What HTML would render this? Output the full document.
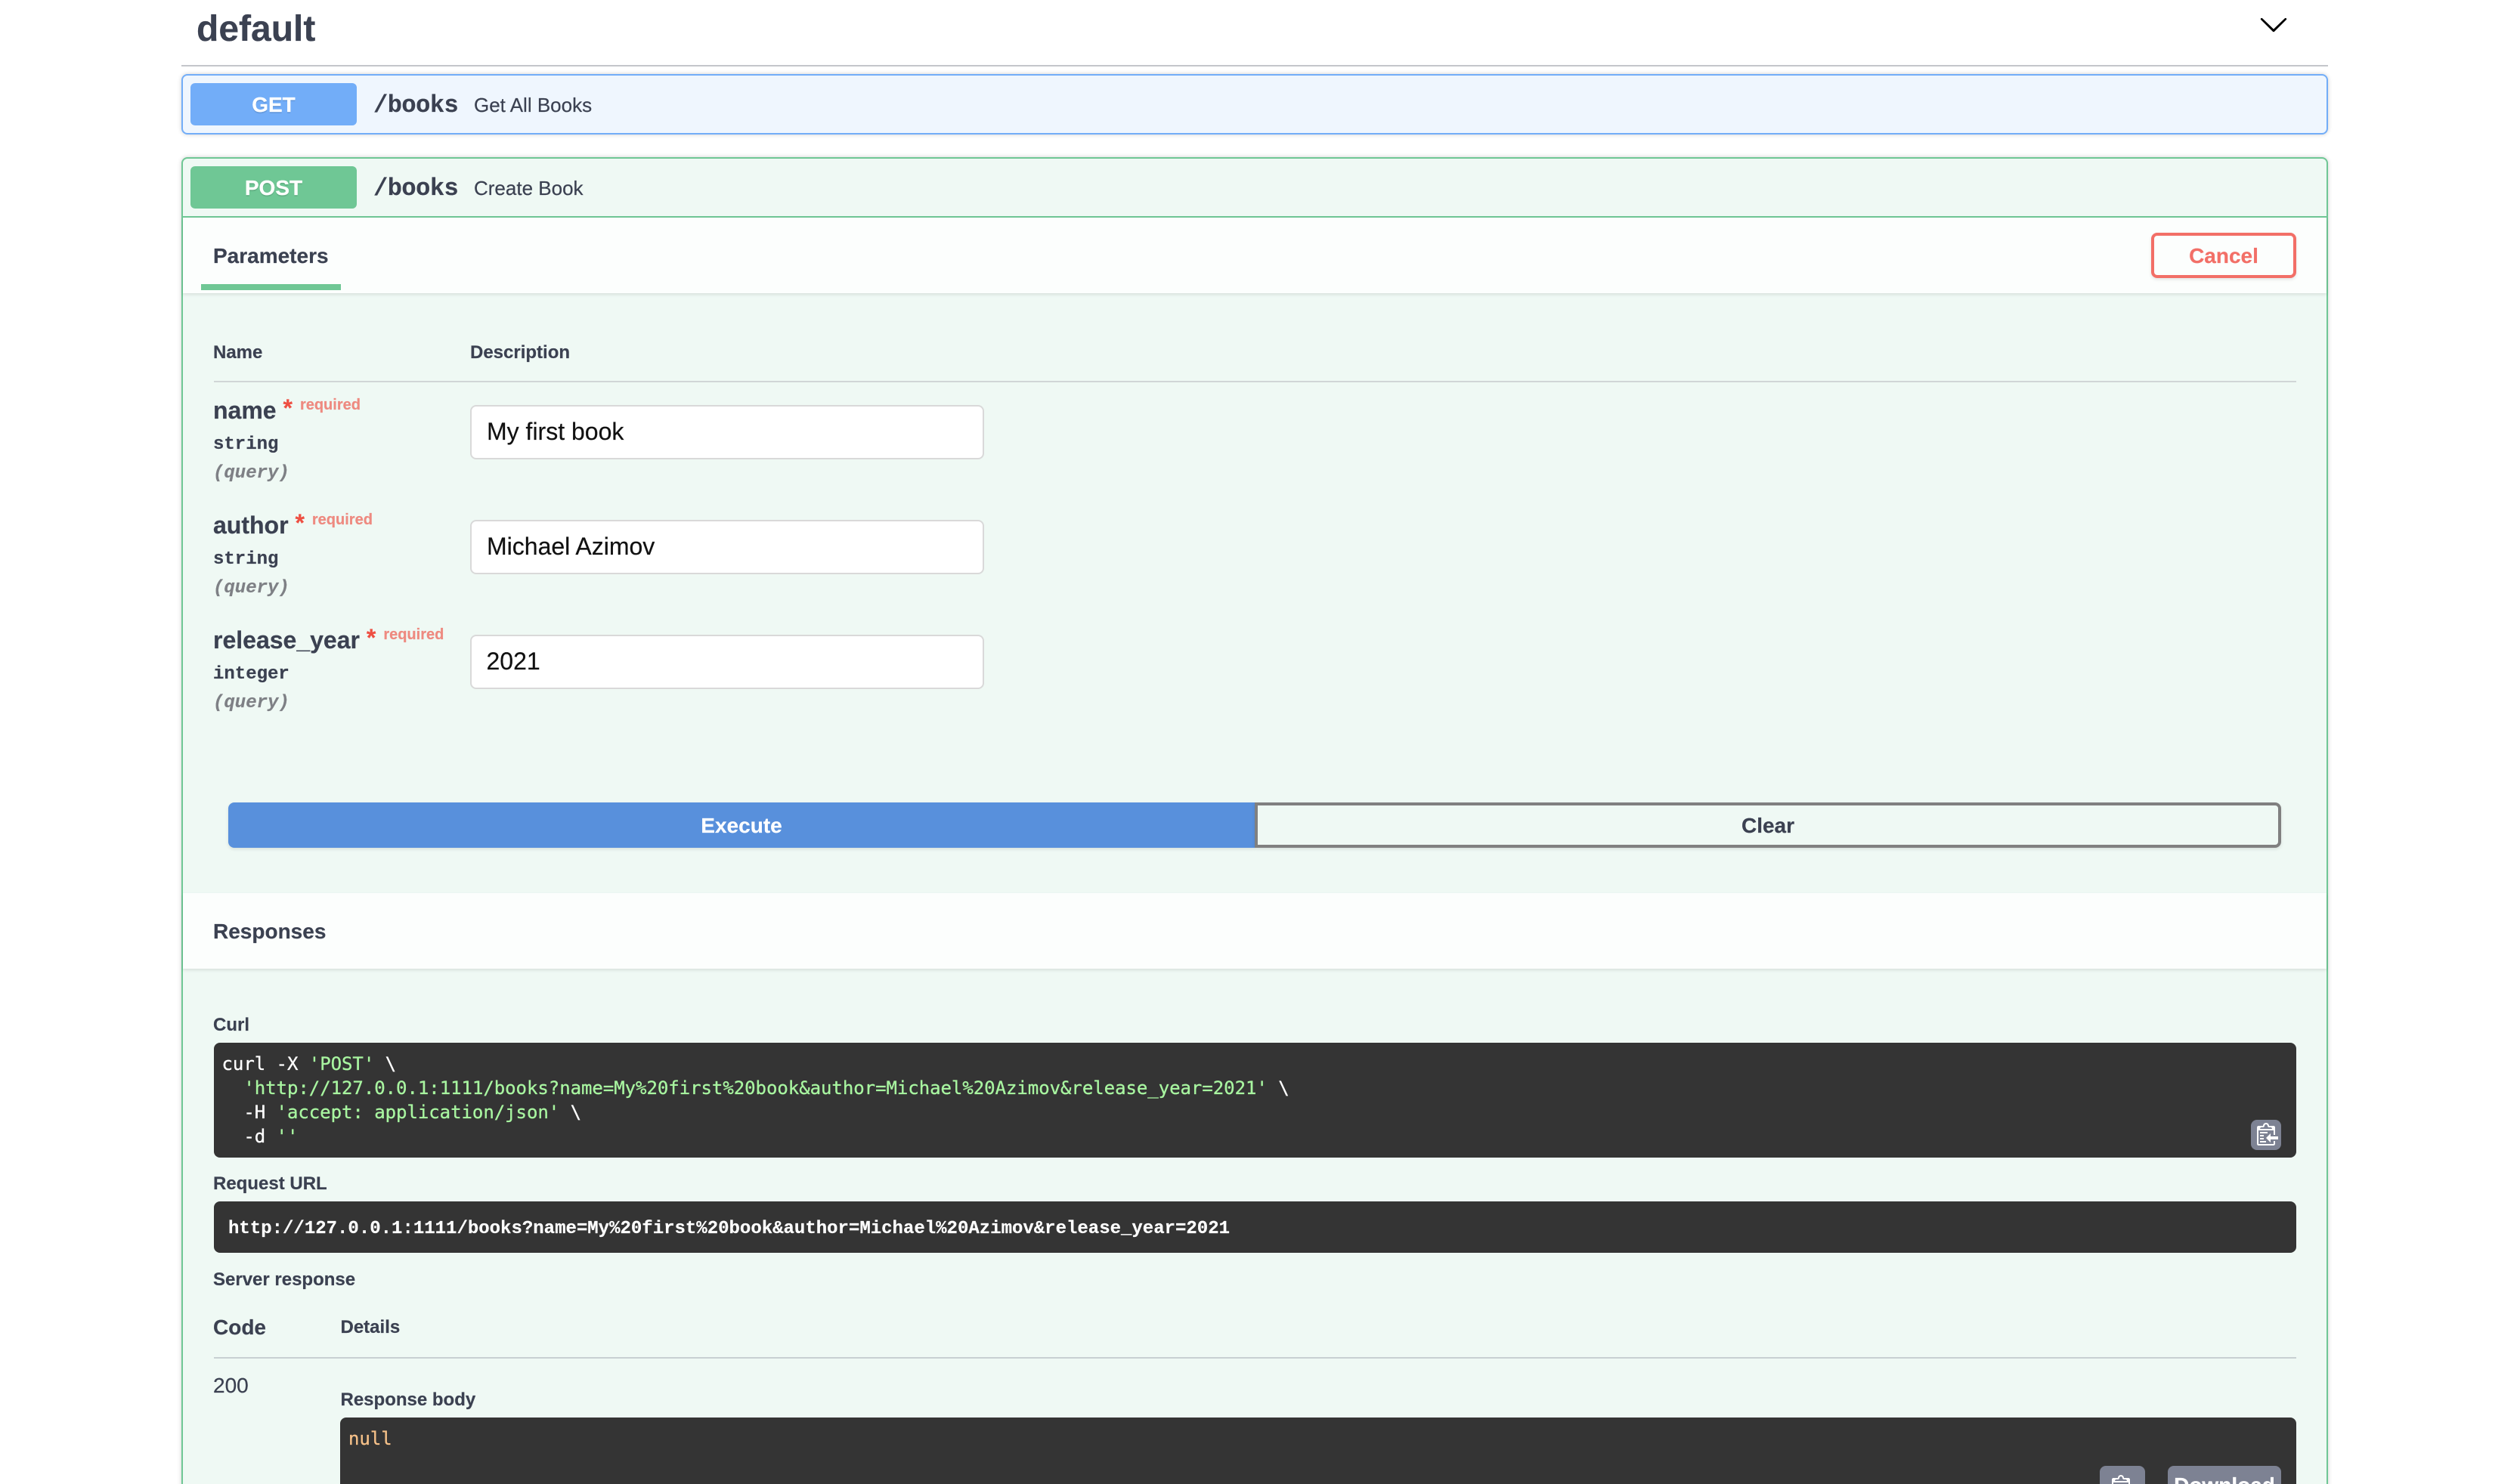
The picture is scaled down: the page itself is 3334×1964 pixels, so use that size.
<!DOCTYPE html>
<html lang="en"><head><meta charset="utf-8"><title>default</title>
<style>
html,body{margin:0;padding:0;background:#fff;}
#p{position:relative;width:3334px;height:1964px;overflow:hidden;background:#fff;font-family:"Liberation Sans",sans-serif;color:#3b4151;}
#p div,#p svg{position:absolute;box-sizing:border-box;}
.t{line-height:1em;white-space:pre;-webkit-text-stroke:.2px currentColor;}
.b{font-weight:bold;}
.f24{font-size:24px;}.f28{font-size:28px;}.f32{font-size:32px;}.f26{font-size:26px;}
.m{font-family:"Liberation Mono",monospace;font-weight:bold;}
.d{font-family:"DejaVu Sans Mono",monospace;font-size:24px;line-height:1em;white-space:pre;color:#fff;letter-spacing:-.04px;-webkit-text-stroke:.3px currentColor;}
.d span{color:#a8f5a0;}
.c{text-align:center;}
.badge{left:252px;width:220px;height:56px;border-radius:6px;}
.input{left:622px;width:680px;height:72px;background:#fff;border:2px solid #d9d9d9;border-radius:8px;}
.code{background:#343434;border-radius:8px;}
.btn{background:#7d8293;border-radius:8px;}
.req{font-size:20px;color:#ee8a80;position:relative;top:-12px;padding-left:10px;}
.star{color:#ee4f42;font-weight:bold;position:relative;top:-3px;}
.q{font-style:italic;color:#7e8085;}
.bar{left:242px;width:2836px;background:#fcfefd;box-shadow:0 2px 4px rgba(0,0,0,.1);}
</style></head><body><div id="p">

<div class="t b" style="left:260px;top:15.4px;font-size:48px;">default</div>
<svg style="left:2988px;top:12px;" width="40" height="40" viewBox="0 0 20 20"><path d="M17.418 6.109c.272-.268.709-.268.979 0s.271.701 0 .969l-7.908 7.83c-.27.268-.707.268-.979 0l-7.908-7.83c-.27-.268-.27-.701 0-.969.271-.268.709-.268.979 0L10 13.25l7.418-7.141z" fill="#000"/></svg>
<div style="left:240px;top:86px;width:2840px;height:2px;background:#c4c6cb;"></div>

<!-- GET -->
<div style="left:240px;top:98px;width:2840px;height:80px;background:#eff6fe;border:2px solid #72adf8;border-radius:8px;box-shadow:0 0 6px rgba(0,0,0,.19);"></div>
<div class="badge" style="top:110px;background:#72adf8;"></div>
<div class="t b f28 c" style="left:252px;width:220px;top:125.3px;color:#fff;text-shadow:0 2px 0 rgba(0,0,0,.1);">GET</div>
<div class="t m f32" style="left:494px;top:123.5px;letter-spacing:-.5px;">/books</div>
<div class="t f26" style="left:627px;top:126px;">Get All Books</div>

<!-- POST -->
<div style="left:240px;top:208px;width:2840px;height:1800px;background:#eff9f4;border:2px solid #6fc795;border-radius:8px;box-shadow:0 0 6px rgba(0,0,0,.19);"></div>
<div class="badge" style="top:220px;background:#6fc795;"></div>
<div class="t b f28 c" style="left:252px;width:220px;top:235.3px;color:#fff;text-shadow:0 2px 0 rgba(0,0,0,.1);">POST</div>
<div class="t m f32" style="left:494px;top:233.5px;letter-spacing:-.5px;">/books</div>
<div class="t f26" style="left:627px;top:236px;">Create Book</div>
<div style="left:242px;top:286px;width:2836px;height:2px;background:#6fc795;"></div>

<!-- Parameters header -->
<div class="bar" style="top:288px;height:100px;"></div>
<div class="t b f28" style="left:282px;top:325.3px;">Parameters</div>
<div style="left:266px;top:376px;width:185px;height:8px;background:#6fc795;"></div>
<div style="left:2846px;top:308px;width:192px;height:60px;border:4px solid #f26f67;border-radius:8px;box-shadow:0 2px 4px rgba(0,0,0,.1);"></div>
<div class="t b f28 c" style="left:2846px;width:192px;top:325.3px;color:#f26f67;">Cancel</div>

<!-- Table -->
<div class="t b f24" style="left:282px;top:455.3px;">Name</div>
<div class="t b f24" style="left:622px;top:455.3px;">Description</div>
<div style="left:283px;top:504px;width:2755px;height:2px;background:#d0d6d6;"></div>

<div class="t b f32" style="left:282px;top:526.9px;">name<span class="star">&nbsp;*</span><span class="req">required</span></div>
<div class="t m f24" style="left:282px;top:576.6px;">string</div>
<div class="t m f24 q" style="left:282px;top:614.6px;">(query)</div>
<div class="input" style="top:536px;"></div>
<div class="t f32" style="left:644px;top:555.4px;color:#111;">My first book</div>

<div class="t b f32" style="left:282px;top:678.9px;">author<span class="star">&nbsp;*</span><span class="req">required</span></div>
<div class="t m f24" style="left:282px;top:728.6px;">string</div>
<div class="t m f24 q" style="left:282px;top:766.6px;">(query)</div>
<div class="input" style="top:688px;"></div>
<div class="t f32" style="left:644px;top:707.4px;color:#111;">Michael Azimov</div>

<div class="t b f32" style="left:282px;top:830.9px;">release_year<span class="star">&nbsp;*</span><span class="req">required</span></div>
<div class="t m f24" style="left:282px;top:880.6px;">integer</div>
<div class="t m f24 q" style="left:282px;top:918.6px;">(query)</div>
<div class="input" style="top:840px;"></div>
<div class="t f32" style="left:643.5px;top:859.4px;color:#111;">2021</div>

<!-- Buttons -->
<div style="left:302px;top:1062px;width:1358px;height:60px;background:#5890dc;border-radius:8px 0 0 8px;box-shadow:0 2px 4px rgba(0,0,0,.1);"></div>
<div class="t b f28 c" style="left:302px;width:1358px;top:1079px;color:#fff;">Execute</div>
<div style="left:1660px;top:1062px;width:1358px;height:60px;border:4px solid #808080;border-radius:0 8px 8px 0;box-shadow:0 2px 4px rgba(0,0,0,.1);"></div>
<div class="t b f28 c" style="left:1660px;width:1358px;top:1079px;">Clear</div>

<!-- Responses -->
<div class="bar" style="top:1182px;height:100px;"></div>
<div class="t b f28" style="left:282px;top:1218.5px;">Responses</div>

<div class="t b f24" style="left:282px;top:1344.7px;">Curl</div>
<div class="code" style="left:283px;top:1380px;width:2755px;height:152px;"></div>
<div class="d" style="left:293.5px;top:1395.7px;">curl -X <span>'POST'</span> \</div>
<div class="d" style="left:293.5px;top:1427.7px;">  <span>'http://127.0.0.1:1111/books?name=My%20first%20book&amp;author=Michael%20Azimov&amp;release_year=2021'</span> \</div>
<div class="d" style="left:293.5px;top:1459.7px;">  -H <span>'accept: application/json'</span> \</div>
<div class="d" style="left:293.5px;top:1491.7px;">  -d <span>''</span></div>
<div class="btn" style="left:2978px;top:1482px;width:40px;height:40px;"></div>
<svg style="left:2986px;top:1484px;" width="32" height="32" viewBox="0 0 16 16"><path fill="#fff" fill-rule="evenodd" d="M2 13h4v1H2v-1zm5-6H2v1h5V7zm2 3V8l-3 3 3 3v-2h5v-2H9zM4.500 9H2v1h2.500V9zM2 12h2.500v-1H2v1zm9 1h1v2c-.02.28-.11.52-.3.7-.19.18-.42.28-.7.3H1c-.55 0-1-.45-1-1V4c0-.55.45-1 1-1h3c0-1.110.89-2 2-2 1.110 0 2 .89 2 2h3c.55 0 1 .45 1 1v5h-1V6H1v9h10v-2zM2 5h8c0-.55-.45-1-1-1H8c-.55 0-1-.45-1-1s-.45-1-1-1-1 .45-1 1-.45 1-1 1H3c-.55 0-1 .45-1 1z"/></svg>

<div class="t b f24" style="left:282px;top:1554.7px;">Request URL</div>
<div class="code" style="left:283px;top:1590px;width:2755px;height:68px;"></div>
<div class="t m f24" style="left:302px;top:1614.6px;color:#fff;">http://127.0.0.1:1111/books?name=My%20first%20book&amp;author=Michael%20Azimov&amp;release_year=2021</div>

<div class="t b f24" style="left:282px;top:1681.7px;">Server response</div>
<div class="t b f28" style="left:282px;top:1743.3px;">Code</div>
<div class="t b f24" style="left:450.5px;top:1744.7px;">Details</div>
<div style="left:283px;top:1796px;width:2755px;height:2px;background:#c8d0d2;"></div>
<div class="t f28" style="left:282px;top:1820.3px;">200</div>
<div class="t b f24" style="left:450.5px;top:1840.7px;">Response body</div>
<div class="code" style="left:450px;top:1876px;width:2588px;height:140px;"></div>
<div class="d" style="left:461px;top:1891.7px;color:#f5c088;">null</div>
<div class="btn" style="left:2778px;top:1940px;width:60px;height:60px;"></div>
<svg style="left:2794px;top:1950px;" width="32" height="32" viewBox="0 0 16 16"><path fill="#fff" fill-rule="evenodd" d="M2 13h4v1H2v-1zm5-6H2v1h5V7zm2 3V8l-3 3 3 3v-2h5v-2H9zM4.500 9H2v1h2.500V9zM2 12h2.500v-1H2v1zm9 1h1v2c-.02.28-.11.52-.3.7-.19.18-.42.28-.7.3H1c-.55 0-1-.45-1-1V4c0-.55.45-1 1-1h3c0-1.110.89-2 2-2 1.110 0 2 .89 2 2h3c.55 0 1 .45 1 1v5h-1V6H1v9h10v-2zM2 5h8c0-.55-.45-1-1-1H8c-.55 0-1-.45-1-1s-.45-1-1-1-1 .45-1 1-.45 1-1 1H3c-.55 0-1 .45-1 1z"/></svg>
<div class="btn" style="left:2868px;top:1940px;width:150px;height:60px;"></div>
<div class="t b f28 c" style="left:2868px;width:150px;top:1952px;color:#fff;">Download</div>

</div></body></html>
